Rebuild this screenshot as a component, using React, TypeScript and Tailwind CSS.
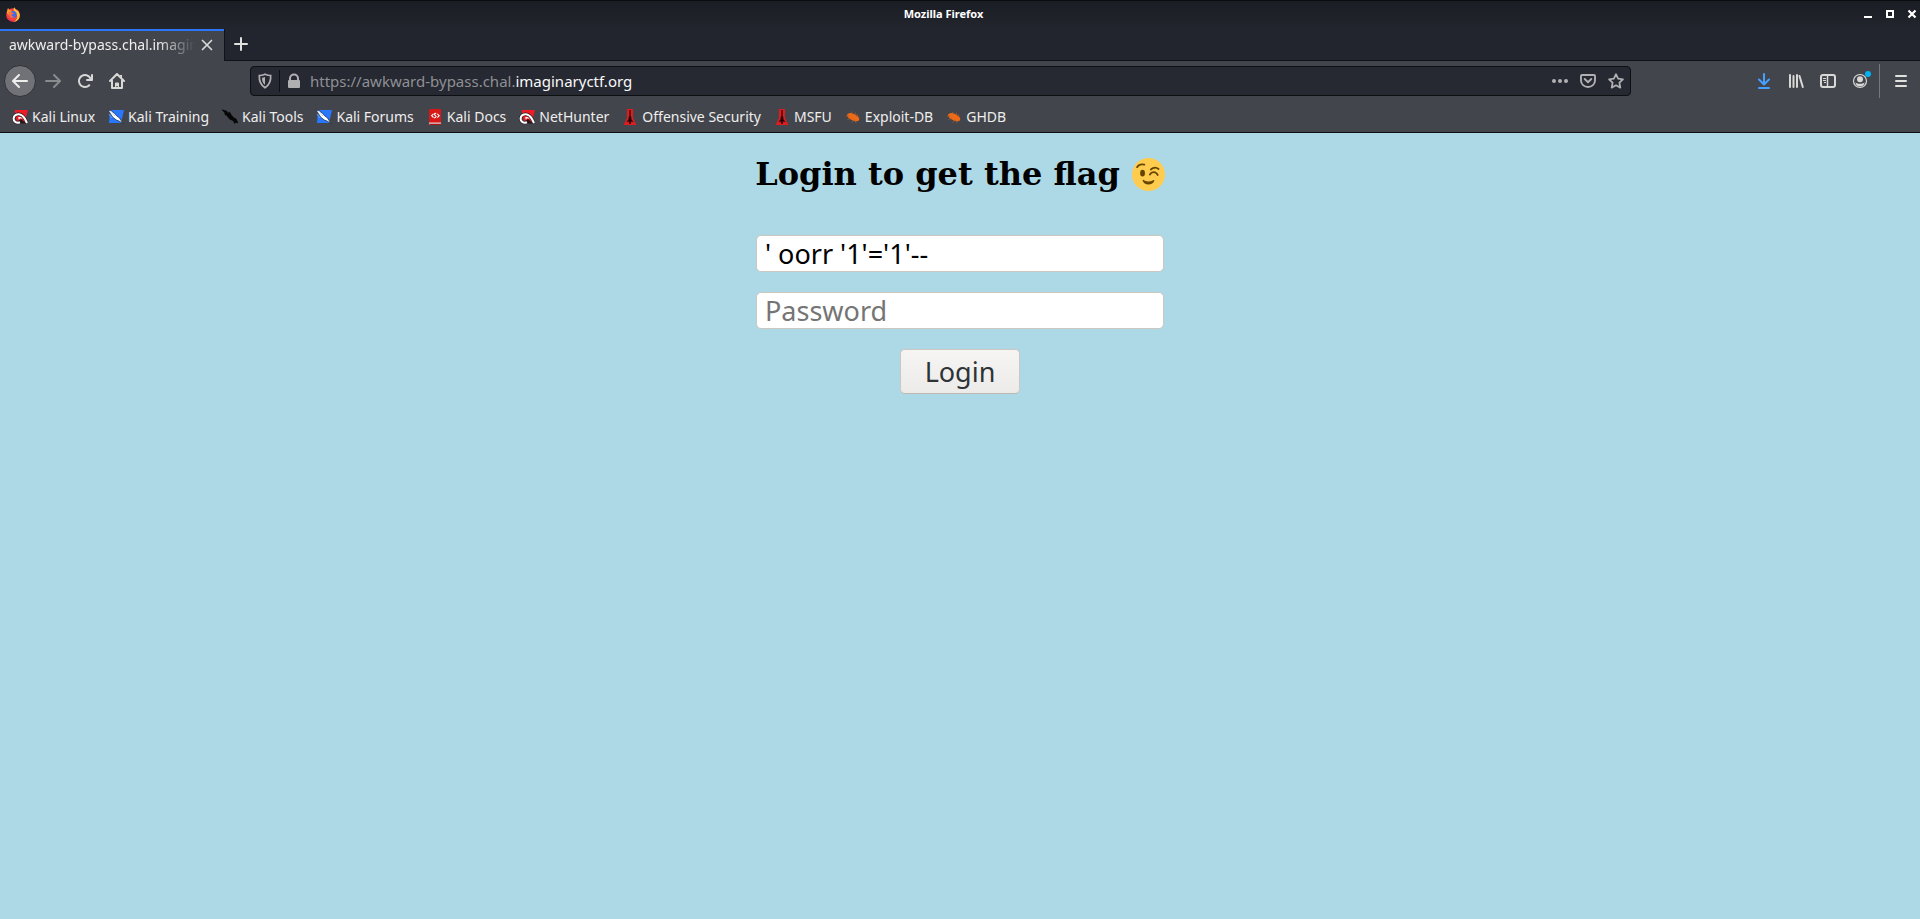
import React, { useState } from 'react';

type IconProps = { children: React.ReactNode; className?: string };

function Icon({ children, className = '' }: IconProps) {
  return (
    <svg viewBox="0 0 16 16" className={`size-4 shrink-0 ${className}`} fill="currentColor" aria-hidden="true">
      {children}
    </svg>
  );
}

function FirefoxLogo() {
  return (
    <Icon>
      <circle cx="8" cy="9" r="6.8" fill="#f4433f" />
      <path d="M9.5 1.2c.3 1.6 1.3 2.2 2 3 1.7.2 3.2 2.300 3.300 4.800C14.800 13 12 15.700 8.500 15.800c3-1.600 4.500-4 3.500-6.500-.6-1.800-2-2.500-3-4C8.300 3.800 8.700 2.200 9.500 1.200z" fill="#ffbf3c" />
      <path d="M2.300 4.200C2.300 3 2.800 2.500 3.300 2c.2 1 .7 1.500 1.400 1.900L8 5.500 4 9 1.600 7z" fill="#ff9a2e" />
      <circle cx="8.200" cy="8.600" r="3.500" fill="#4567e8" />
      <path d="M3.200 6.200c1.600-.7 3-.3 4.200.6l1.500.2c-.3 1-1.500 1.200-2.200 1.600-.4 1.600 1 2.500 3 2-1 1.500-3.700 1.700-5 0z" fill="#ff7139" />
      <path d="M2 10c1 4 5 5.500 9 4.500-3.500 2-8.500.5-9-4.500z" fill="#e8206d" />
    </Icon>
  );
}

function NetIcon() {
  return (
    <Icon>
      <path d="M2.500 1H16l-3.500 13H5z" fill="#ee1c25" />
      <path d="M6 12l3-2 5 4.500H4z" fill="#24161a" />
      <path d="M8 13.200C4 14.800 1.500 12 1.600 9.500 1.800 6.500 4.500 5 7 5.200c3 .3 4.500 2.300 5.700 4.300.8 1.500 1.300 2.700 2.300 4.500" fill="none" stroke="#24161a" strokeWidth="3.200" />
      <path d="M8 13.200C4 14.800 1.500 12 1.600 9.500 1.800 6.500 4.500 5 7 5.200c3 .3 4.500 2.300 5.700 4.300.8 1.500 1.300 2.700 2.300 4.500" fill="none" stroke="#fff" strokeWidth="2.100" />
      <path d="M6 8.500c1.500-1 3.500-.5 4.500 1.200L8 9.300l-1 1.500z" fill="#fff" />
    </Icon>
  );
}

function DragonBlueIcon() {
  return (
    <Icon>
      <path d="M2 1h14l-3 13H1z" fill="#2777ff" />
      <path d="M0 1l3 .7 3.500 2.500 2 2.500 3 2.300 3.500 5.500-4-2.500-2.700-1L5 8.500 2 4z" fill="#fff" stroke="#17253d" strokeWidth=".7" />
      <path d="M1 5l3 4M3 2l4 5" stroke="#8ab5ef" strokeWidth=".7" />
    </Icon>
  );
}

function DragonBlackIcon() {
  return (
    <Icon>
      <path d="M0 .8l4.500 1.200 1.800 2L7.500 3l1.800 3 2.700 3 2 .8L16 14l-2-.8-1.200 1.300-1.800-3-3.300-1.300-3.200-4-1.300-.2-.5-2.200z" fill="#050607" stroke="#050607" strokeWidth=".6" />
    </Icon>
  );
}

function DocsIcon() {
  return (
    <Icon>
      <path d="M3 0h11v14H3a1 1 0 0 1-1-1V1z" fill="#d91717" />
      <path d="M2 13.500h12V16H3l-1-1z" fill="#d8d4d2" />
      <path d="M2 14.700h12V16H3z" fill="#a91414" />
      <path d="M6.500 4.800L4.600 6.600l1.900 1.900M10.300 4.800l1.900 1.900-1.900 1.900M9.300 4.200c-3 0-1.500 2-.8 2.500.8.5 1 2-1.500 2.300" fill="none" stroke="#fff" strokeWidth="1.100" />
    </Icon>
  );
}

function OffsecIcon() {
  return (
    <Icon>
      <path d="M5 0h6v9l3.500 7h-13L5 9z" fill="#df1d20" />
      <path d="M7.400 1h1.200v6l.8 1.300v2L11.500 13 9 12.400 8.700 15H7.300L7 12.400 4.500 13l2.100-2.700v-2L7.400 7z" fill="#260406" />
    </Icon>
  );
}

function BugIcon() {
  return (
    <Icon>
      <path d="M2 5.500L4.500 4l3 .2L10 5.500l3 2 1.300 2.200-.6 2.100-3 .7-3.500-1.200L4 9.500 2.500 7.500z" fill="#ef6a16" />
      <path d="M1 7h4M2.500 10.500l4-1.500M7 13.500l1.500-3M6 2.500l2 3.500M10.500 3.500l.5 3M13 5.500L11.500 8M11 14l-1-3" stroke="#b0602f" strokeWidth=".6" />
    </Icon>
  );
}

const bookmarks = [
  { label: 'Kali Linux', icon: NetIcon },
  { label: 'Kali Training', icon: DragonBlueIcon },
  { label: 'Kali Tools', icon: DragonBlackIcon },
  { label: 'Kali Forums', icon: DragonBlueIcon },
  { label: 'Kali Docs', icon: DocsIcon },
  { label: 'NetHunter', icon: NetIcon },
  { label: 'Offensive Security', icon: OffsecIcon },
  { label: 'MSFU', icon: OffsecIcon },
  { label: 'Exploit-DB', icon: BugIcon },
  { label: 'GHDB', icon: BugIcon },
];

const ARROW =
  'M15 7H3.414l4.293-4.293a1 1 0 0 0-1.414-1.414l-6 6a1 1 0 0 0 0 1.414l6 6a1 1 0 0 0 1.414-1.414L3.414 9H15a1 1 0 0 0 0-2z';

function ToolButton({ label, children, className = '' }: { label: string; children: React.ReactNode; className?: string }) {
  return (
    <button type="button" aria-label={label} className={`flex size-8 shrink-0 items-center justify-center ${className}`}>
      {children}
    </button>
  );
}

function TitleBar() {
  return (
    <header className="flex h-[29px] items-center border-t border-[#0b0c0f] bg-linear-to-b from-[#1b1d24] to-[#23252e] pb-[2px] pl-[5px] text-white">
      <FirefoxLogo />
      <span className="ml-[6px] flex-1 text-center text-[11px] leading-4 font-bold">Mozilla Firefox</span>
      <div className="flex items-center justify-end gap-[6px]">
        <button type="button" aria-label="Minimize" className="flex size-4 items-center justify-center">
          <Icon><path d="M4 10h8v2H4z" /></Icon>
        </button>
        <button type="button" aria-label="Maximize" className="flex size-4 items-center justify-center">
          <Icon><path d="M4 4h8v8H4zM6 6v4h4V6z" fillRule="evenodd" /></Icon>
        </button>
        <button type="button" aria-label="Close" className="flex size-4 items-center justify-center">
          <Icon><path d="M4.500 4.500l7 7M11.500 4.500l-7 7" stroke="currentColor" strokeWidth="2.200" /></Icon>
        </button>
      </div>
    </header>
  );
}

function TabStrip() {
  return (
    <div className="flex h-8 bg-[#23252e]">
      <div className="flex w-56 items-center border-t-2 border-[#2a76f4] bg-[#43454c] px-[9px] pb-[2px]">
        <span className="min-w-0 flex-1 overflow-hidden mask-r-from-80% text-[14px] leading-5 whitespace-nowrap">
          awkward-bypass.chal.imaginaryctf.org
        </span>
        <button type="button" aria-label="Close tab" className="ml-1 flex size-4 items-center justify-center text-[#d8d8d6]">
          <Icon><path d="M3.500 3.500l9 9M12.500 3.500l-9 9" stroke="currentColor" strokeWidth="1.700" strokeLinecap="round" /></Icon>
        </button>
      </div>
      <div className="flex flex-1 border-b border-l border-[#111217]">
        <ToolButton label="New tab" className="-mt-px text-[#e0e0de]">
          <Icon><path d="M8 2v12M2 8h12" stroke="currentColor" strokeWidth="2" strokeLinecap="round" /></Icon>
        </ToolButton>
      </div>
    </div>
  );
}

function AddressBar() {
  return (
    <div className="flex h-[30px] min-w-0 flex-1 items-center rounded-[4px] border border-[#0e0f13] bg-[#262832] text-[#b0b0b3]">
      <button type="button" aria-label="Tracking protection" className="flex w-7 justify-center">
        <Icon>
          <path d="M8 1.200c2 .9 4 1.300 5.700 1.300.3 5.500-1.200 9.500-5.700 12.200C3.500 12 2 8 2.300 2.500 4 2.500 6 2.100 8 1.200z" fill="none" stroke="currentColor" strokeWidth="1.700" />
          <path d="M8 4c1 .4 2 .6 3 .7 0 3-.8 5.600-3 7.300z" transform="matrix(-1 0 0 1 16 0)" />
        </Icon>
      </button>
      <span className="h-[22px] w-px bg-[#0e0f13]" />
      <button type="button" aria-label="Site information" className="mr-2 ml-[6px] flex">
        <Icon><path d="M13 7V5.500A5 5 0 0 0 3 5.500V7a1 1 0 0 0-1 1v6a1 1 0 0 0 1 1h10a1 1 0 0 0 1-1V8a1 1 0 0 0-1-1zM5 5.500a3 3 0 0 1 6 0V7H5z" fillRule="evenodd" /></Icon>
      </button>
      <span className="min-w-0 flex-1 truncate text-[15px] leading-5 text-[#8f9094]">
        https://awkward-bypass.chal.<span className="text-[#f9f9fa]">imaginaryctf.org</span>
      </span>
      <div className="mr-[6px] flex gap-3">
        <button type="button" aria-label="Page actions">
          <Icon><circle cx="2" cy="8" r="2" /><circle cx="8" cy="8" r="2" /><circle cx="14" cy="8" r="2" /></Icon>
        </button>
        <button type="button" aria-label="Save to Pocket">
          <Icon>
            <path d="M2 2h12a1 1 0 0 1 1 1v4.500a7 6.500 0 0 1-14 0V3a1 1 0 0 1 1-1z" fill="none" stroke="currentColor" strokeWidth="1.900" />
            <path d="M4.700 6L8 9.200 11.300 6" fill="none" stroke="currentColor" strokeWidth="1.900" strokeLinecap="round" strokeLinejoin="round" />
          </Icon>
        </button>
        <button type="button" aria-label="Bookmark this page">
          <Icon><path d="M8 1.200l2.100 4.400 4.800.7-3.500 3.400.9 4.900L8 12.300l-4.300 2.300.9-4.900L1.100 6.300l4.800-.7z" fill="none" stroke="currentColor" strokeWidth="1.800" strokeLinejoin="round" /></Icon>
        </button>
      </div>
    </div>
  );
}

function Toolbar() {
  return (
    <nav aria-label="Navigation" className="flex h-10 items-center pl-1 text-[#d8d8d6]">
      <ToolButton label="Back" className="rounded-full border border-[#303238] bg-[#717277] text-[#eeeeec]">
        <Icon><path d={ARROW} /></Icon>
      </ToolButton>
      <ToolButton label="Forward" className="ml-px text-[#8a8b8f]">
        <Icon className="-scale-x-100"><path d={ARROW} /></Icon>
      </ToolButton>
      <ToolButton label="Reload">
        <Icon><path d="M15 1a1 1 0 0 0-1 1v2.418A6.995 6.995 0 1 0 8 15a6.954 6.954 0 0 0 4.950-2.050 1 1 0 0 0-1.414-1.414A5.019 5.019 0 1 1 12.549 6H10a1 1 0 0 0 0 2h5a1 1 0 0 0 1-1V2a1 1 0 0 0-1-1z" /></Icon>
      </ToolButton>
      <ToolButton label="Home">
        <Icon>
          <path d="M1 8l7-7 7 7M3 7.500V15h10V7.500" fill="none" stroke="currentColor" strokeWidth="2" strokeLinecap="round" strokeLinejoin="round" />
          <path d="M6 15v-4.500a1 1 0 0 1 1-1h2a1 1 0 0 1 1 1V15H8.700v-2H7.300v2z" />
          <path d="M11 2h2v3l-2-2z" />
        </Icon>
      </ToolButton>
      <div className="flex min-w-0 flex-1 px-[117px]">
        <AddressBar />
      </div>
      <ToolButton label="Downloads" className="text-[#45a1ff]">
        <Icon><path d="M8 1v10M3 6.500l5 5 5-5M3 15h10" fill="none" stroke="currentColor" strokeWidth="2" strokeLinecap="round" strokeLinejoin="round" /></Icon>
      </ToolButton>
      <ToolButton label="Library">
        <Icon><path d="M2 2v12M5.500 3v11M9 2v12M11.500 3l3.300 11" stroke="currentColor" strokeWidth="2" strokeLinecap="round" /></Icon>
      </ToolButton>
      <ToolButton label="Sidebars">
        <Icon>
          <rect x="1" y="2" width="14" height="12" rx="2" fill="none" stroke="currentColor" strokeWidth="2" />
          <path d="M7.500 2v12" stroke="currentColor" strokeWidth="1.500" />
          <path d="M3 5.500h3M3 7.500h3M4 9.500h2" stroke="currentColor" strokeWidth="1" />
        </Icon>
      </ToolButton>
      <ToolButton label="Account" className="relative">
        <Icon>
          <circle cx="8" cy="8" r="6.500" fill="none" stroke="currentColor" strokeWidth="1.200" />
          <circle cx="8" cy="6.200" r="3" />
          <path d="M3.500 9.500c1 1 2.500 1.300 4.500 1.300s3.500-.3 4.500-1.300c0 2.500-2 4-4.500 4s-4.500-1.500-4.500-4z" />
        </Icon>
        <span className="absolute top-[6px] right-[5px] size-[6px] rounded-full bg-[#00b3f4]" />
      </ToolButton>
      <span className="ml-[3px] h-[34px] w-px bg-[#77787c]" />
      <ToolButton label="Open menu" className="mr-[3px] ml-[5px] text-[#e0e0de]">
        <Icon><path d="M3 3h10M3 8h10M3 13h10" stroke="currentColor" strokeWidth="2" strokeLinecap="round" /></Icon>
      </ToolButton>
    </nav>
  );
}

function BookmarkBar() {
  return (
    <nav aria-label="Bookmarks" className="flex h-8 items-center gap-[13px] border-b border-[#0e0f13] pl-3">
      {bookmarks.map(({ label, icon: Glyph }) => (
        <a key={label} href="#" className="flex items-center gap-1 text-[14px] leading-5 whitespace-nowrap">
          <Glyph />
          {label}
        </a>
      ))}
    </nav>
  );
}

function WinkFace() {
  return (
    <svg viewBox="0 0 36 36" className="size-[33px]" role="img" aria-label="Winking face">
      <circle cx="18" cy="18" r="18" fill="#ffcc4d" />
      <ellipse cx="11.500" cy="16.500" rx="2.600" ry="3.600" fill="#664500" />
      <path d="M5.500 10c2-3 5-3.600 8-2.700M20.500 12.500c3-2.500 6-2.500 8.500-.5" fill="none" stroke="#664500" strokeWidth="1.900" strokeLinecap="round" />
      <path d="M19.500 18c2-3.500 6.500-3.500 8.500.5" fill="none" stroke="#664500" strokeWidth="2" strokeLinecap="round" />
      <path d="M11.500 24.500c.4-1.200 1.500-.7 2 0 2.500 1.500 6.500 1.500 9 0 .8-.8 1.800-.8 2 0-1 3-3.300 4.400-6.500 4.400s-5.500-1.400-6.500-4.400z" fill="#664500" />
    </svg>
  );
}

const fieldClass =
  'h-[37px] w-full rounded-[5px] border border-[#cdc7c2] bg-white px-2 text-[27px] leading-8 text-black outline-none placeholder:text-[#757575]';

function LoginPage() {
  const [user, setUser] = useState("' oorr '1'='1'--");
  const [password, setPassword] = useState('');
  return (
    <main className="flex flex-1 flex-col items-center bg-[#add8e6] pt-[22px]">
      <h1 className="flex items-center gap-3 font-['DejaVu_Serif',serif] text-[32px] leading-[38px] font-bold text-black">
        Login to get the flag <WinkFace />
      </h1>
      <form className="mt-[42px] flex w-[408px] flex-col items-center gap-5" onSubmit={(e) => e.preventDefault()}>
        <input aria-label="Username" placeholder="Username" className={fieldClass} value={user} onChange={(e) => setUser(e.target.value)} />
        <input aria-label="Password" type="password" placeholder="Password" className={fieldClass} value={password} onChange={(e) => setPassword(e.target.value)} />
        <button type="submit" className="h-[45px] rounded-[5px] border border-[#cdc7c2] border-b-[#bfb8b1] bg-linear-to-b from-[#f6f5f4] to-[#edebe9] px-6 text-[27px] leading-8 text-[#2e3436]">
          Login
        </button>
      </form>
    </main>
  );
}

export default function App() {
  return (
    <div className="flex min-h-screen flex-col bg-[#43454c] font-['Noto_Sans',sans-serif] text-[#eeeeec]">
      <TitleBar />
      <TabStrip />
      <Toolbar />
      <BookmarkBar />
      <LoginPage />
    </div>
  );
}
